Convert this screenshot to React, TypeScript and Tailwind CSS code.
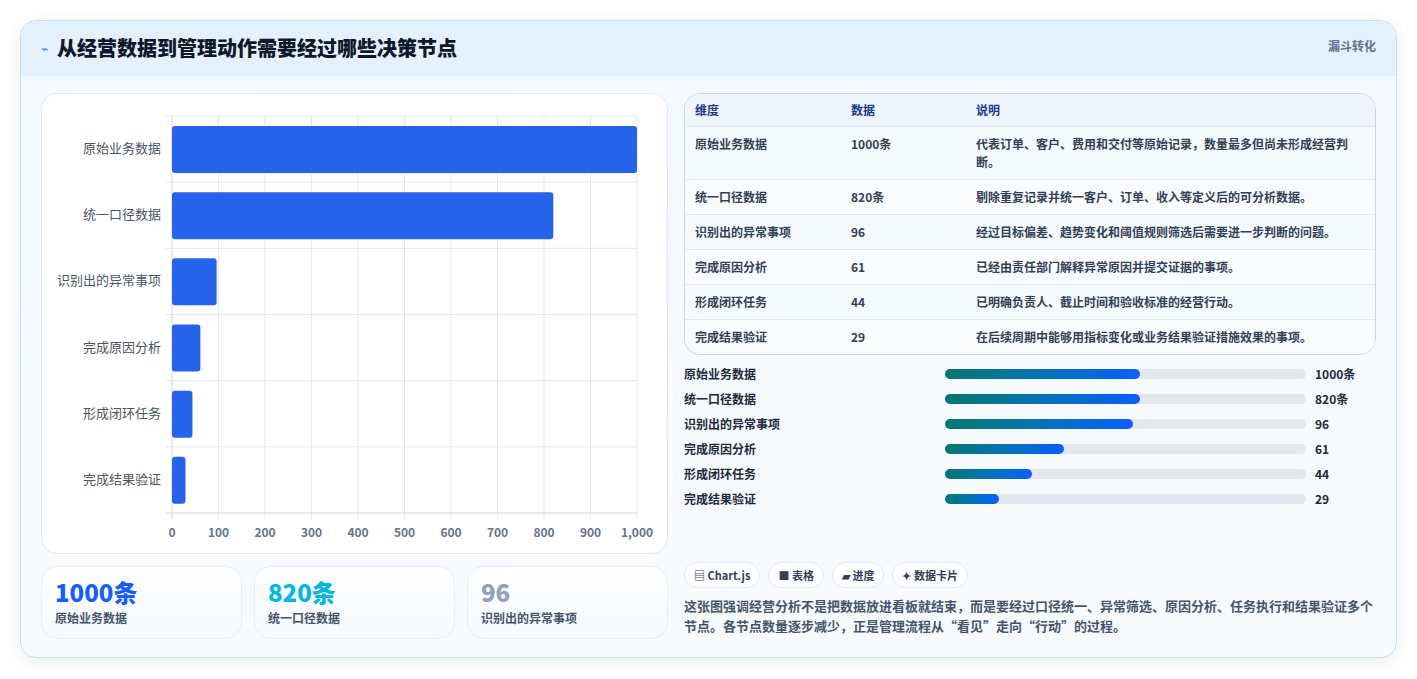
import React from 'react';

const ROWS = [
  { name: '原始业务数据', value: 1000, label: '1000条', desc: '代表订单、客户、费用和交付等原始记录，数量最多但尚未形成经营判断。', pct: 54 },
  { name: '统一口径数据', value: 820, label: '820条', desc: '剔除重复记录并统一客户、订单、收入等定义后的可分析数据。', pct: 54 },
  { name: '识别出的异常事项', value: 96, label: '96', desc: '经过目标偏差、趋势变化和阈值规则筛选后需要进一步判断的问题。', pct: 52 },
  { name: '完成原因分析', value: 61, label: '61', desc: '已经由责任部门解释异常原因并提交证据的事项。', pct: 33 },
  { name: '形成闭环任务', value: 44, label: '44', desc: '已明确负责人、截止时间和验收标准的经营行动。', pct: 24 },
  { name: '完成结果验证', value: 29, label: '29', desc: '在后续周期中能够用指标变化或业务结果验证措施效果的事项。', pct: 15 },
];

const FONT = { fontFamily: '"Noto Sans CJK SC", "Noto Sans", sans-serif' };

function Chart() {
  const L = 130, R = 595, T = 22, B = 419;
  const rh = (B - T) / 6;
  const ticks = [0, 100, 200, 300, 400, 500, 600, 700, 800, 900, 1000];
  return (
    <svg width="627" height="459" className="block">
      {ticks.map(t => {
        const x = L + (t / 1000) * (R - L);
        return (
          <g key={t}>
            <line x1={x} y1={T} x2={x} y2={B + 6} stroke={t === 0 ? '#cbd5e1' : '#e5e7eb'} />
            <text x={x} y={443} textAnchor="middle" fontSize="12" fontWeight="600" fill="#64748b">{t === 1000 ? '1,000' : t}</text>
          </g>
        );
      })}
      {Array.from({ length: 7 }).map((_, i) => (
        <line key={i} x1={L - 6} x2={R} y1={T + i * rh} y2={T + i * rh} stroke={i === 6 ? '#cbd5e1' : '#e5e7eb'} />
      ))}
      {ROWS.map((r, i) => {
        const y = T + i * rh;
        return (
          <g key={r.name}>
            <rect x={L} y={y + 10} width={(r.value / 1000) * (R - L)} height={47} rx={3} fill="#2563eb" />
            <text x={119} y={y + rh / 2 + 4} textAnchor="end" fontSize="13" fill="#4b5563">{r.name}</text>
          </g>
        );
      })}
    </svg>
  );
}

export default function App() {
  return (
    <div className="min-h-screen bg-white px-5 pt-5 pb-5 text-slate-800" style={FONT}>
      <div className="overflow-hidden rounded-2xl border border-sky-200 bg-gradient-to-b from-[#f4f9ff] to-[#f7fbfe] shadow-[0_4px_16px_rgba(15,23,42,0.08)]">
        <div className="flex h-[55px] items-start justify-between border-b border-sky-100 bg-[#e4f1fd] pl-5 pr-5">
          <div className="flex items-center gap-[9px] pt-[12px]">
            <span className="text-[12px] text-blue-500">⌁</span>
            <h1 className="text-[20px] font-black text-slate-900">从经营数据到管理动作需要经过哪些决策节点</h1>
          </div>
          <span className="pt-[16px] text-[12px] font-semibold text-slate-500">漏斗转化</span>
        </div>

        <div className="flex gap-4 px-5 pt-[17px] pb-[18px]">
          <div className="flex w-[627px] flex-col gap-3">
            <div className="rounded-2xl border border-slate-200 bg-white">
              <Chart />
            </div>
            <div className="grid grid-cols-3 gap-3">
              {[
                { v: '1000条', l: '原始业务数据', c: 'text-blue-600' },
                { v: '820条', l: '统一口径数据', c: 'text-cyan-500' },
                { v: '96', l: '识别出的异常事项', c: 'text-slate-400' },
              ].map(s => (
                <div key={s.l} className="h-[73px] rounded-2xl border border-sky-100 bg-gradient-to-b from-white to-[#f5f9ff] px-[13px] pt-[10px]">
                  <div className={`text-[24px] font-extrabold leading-[30px] ${s.c}`}>{s.v}</div>
                  <div className="mt-[2px] text-[12px] font-semibold text-slate-600">{s.l}</div>
                </div>
              ))}
            </div>
          </div>

          <div className="flex flex-1 flex-col">
            <div className="overflow-hidden rounded-2xl border border-slate-300 bg-white">
              <table className="w-full text-[12px]">
                <thead>
                  <tr className="h-[32px] border-b border-slate-200 bg-[#eef5fd] text-left text-blue-900">
                    <th className="w-[166px] pl-[10px] font-bold">维度</th>
                    <th className="w-[125px] font-bold">数据</th>
                    <th className="font-bold">说明</th>
                  </tr>
                </thead>
                <tbody>
                  {ROWS.map((r, i) => (
                    <tr key={r.name} className={`border-b border-slate-200 last:border-0 font-semibold text-slate-700 ${i % 2 ? 'bg-[#f9fbfd]' : 'bg-[#f5fafe]'}`}>
                      <td className="py-[8px] pl-[10px] align-top leading-[18px]">{r.name}</td>
                      <td className="py-[8px] align-top leading-[18px]">{r.label}</td>
                      <td className="py-[8px] pr-4 align-top leading-[18px]">{r.desc}</td>
                    </tr>
                  ))}
                </tbody>
              </table>
            </div>

            <div className="mt-[10px] flex flex-col gap-[7px]">
              {ROWS.map(r => (
                <div key={r.name} className="flex h-[18px] items-center text-[12px] font-bold text-slate-800">
                  <span className="w-[261px]">{r.name}</span>
                  <div className="h-[10px] w-[361px] rounded-full bg-slate-200">
                    <div className="h-full rounded-full bg-gradient-to-r from-teal-700 to-blue-600" style={{ width: `${r.pct}%` }} />
                  </div>
                  <span className="ml-[9px]">{r.label}</span>
                </div>
              ))}
            </div>

            <div className="mt-[54px] flex gap-2">
              {['▤ Chart.js', '■ 表格', '▰ 进度', '✦ 数据卡片'].map(c => (
                <span key={c} className="rounded-full border border-slate-200 bg-white px-[9px] py-[4px] text-[11px] font-bold text-slate-700">{c}</span>
              ))}
            </div>
            <p className="mt-[8px] text-[13px] leading-[20px] font-semibold text-slate-600">
              这张图强调经营分析不是把数据放进看板就结束，而是要经过口径统一、异常筛选、原因分析、任务执行和结果验证多个节点。各节点数量逐步减少，正是管理流程从“看见”走向“行动”的过程。
            </p>
          </div>
        </div>
      </div>
    </div>
  );
}
